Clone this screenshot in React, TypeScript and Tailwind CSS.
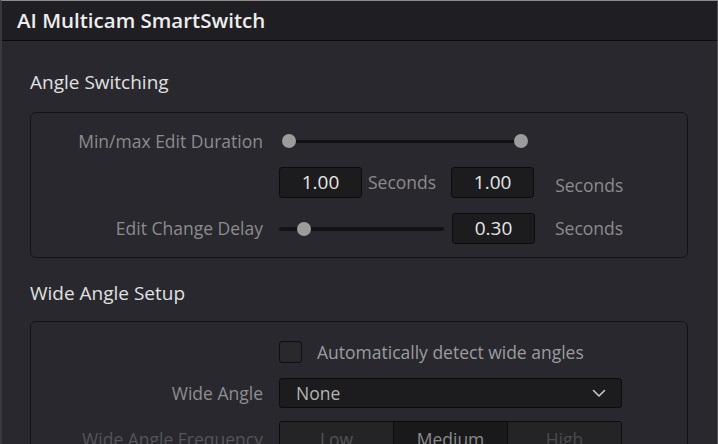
import React from "react";

const font = { fontFamily: '"Open Sans", "Noto Sans", sans-serif' };

const Knob = () => (
  <div className="w-[14px] h-[14px] rounded-full bg-[#9c9c9c] shrink-0" />
);

const NumberBox = ({ value }: { value: string }) => (
  <div className="w-[83px] h-[31px] flex items-center justify-center rounded-[3px] bg-[#1c1c1e] border border-[#0c0c0e] text-[#e6e6e6] text-[19px]">
    {value}
  </div>
);

const App = () => {
  return (
    <div
      style={font}
      className="w-[718px] h-[444px] overflow-hidden bg-[#28282e] border-t border-t-[#8c8c8c] border-l-2 border-l-[#38383d] border-r border-r-[#55555a] flex flex-col"
    >
      <div className="h-10 shrink-0 bg-[#1f1f23] border-b border-[#0b0b0d] flex items-center pl-[15px]">
        <h1 className="text-[#ededed] text-[20.5px] font-semibold">
          AI Multicam SmartSwitch
        </h1>
      </div>

      <div className="flex flex-col pl-[28px] pr-[28px]">
        <h2 className="mt-[29px] text-[#e0e0e0] text-[19px] leading-6">
          Angle Switching
        </h2>

        <div className="mt-[18px] w-[658px] rounded-md border border-[#131317] flex flex-col pt-[16px] pb-[13px] text-[17.5px]">
          <div className="h-6 flex items-center">
            <span className="w-[232px] text-right text-[#8c8c8c]">
              Min/max Edit Duration
            </span>
            <div className="ml-[19px] w-[246px] flex items-center">
              <Knob />
              <div className="flex-1 h-[3px] bg-[#121214]" />
              <Knob />
            </div>
          </div>

          <div className="mt-[14px] h-[31px] flex items-center">
            <div className="ml-[248px] flex items-center">
              <NumberBox value="1.00" />
              <span className="ml-[6px] text-[#8c8c8c]">Seconds</span>
              <div className="ml-[15px]">
                <NumberBox value="1.00" />
              </div>
              <span className="ml-[21px] mt-[6px] text-[#8c8c8c]">Seconds</span>
            </div>
          </div>

          <div className="mt-[15px] h-[31px] flex items-center">
            <span className="w-[232px] text-right text-[#8c8c8c]">
              Edit Change Delay
            </span>
            <div className="ml-[16px] w-[165px] relative flex items-center">
              <div className="w-full h-[4px] rounded-full bg-[#141416]" />
              <div className="absolute left-[18px]">
                <Knob />
              </div>
            </div>
            <div className="ml-[8px]">
              <NumberBox value="0.30" />
            </div>
            <span className="ml-[20px] text-[#8c8c8c]">Seconds</span>
          </div>
        </div>

        <h2 className="mt-[23px] text-[#e0e0e0] text-[19px] leading-6">
          Wide Angle Setup
        </h2>

        <div className="mt-[16px] w-[658px] h-[140px] rounded-md border border-[#131317] flex flex-col pt-[19px] text-[17.5px]">
          <div className="h-[22px] flex items-center">
            <div className="ml-[248px] w-[23px] h-[22px] rounded-[3px] bg-[#29292b] border border-[#0f0f11]" />
            <span className="ml-[15px] text-[#9c9c9c]">
              Automatically detect wide angles
            </span>
          </div>

          <div className="mt-[15px] h-[30px] flex items-center">
            <span className="w-[232px] text-right text-[#8e8e8e]">
              Wide Angle
            </span>
            <div className="ml-[16px] w-[343px] h-[30px] rounded-[3px] bg-[#1c1c1e] border border-[#0c0c0e] flex items-center justify-between pl-[16px] pr-[15px]">
              <span className="text-[#b4b4b4]">None</span>
              <svg width="14" height="9" viewBox="0 0 14 9" fill="none">
                <path
                  d="M1.5 1.5 L7 7 L12.5 1.5"
                  stroke="#c8c8c8"
                  strokeWidth="1.6"
                  strokeLinecap="round"
                  strokeLinejoin="round"
                />
              </svg>
            </div>
          </div>

          <div className="mt-[13px] h-[36px] flex items-center">
            <span className="w-[232px] text-right text-[#55555a]">
              Wide Angle Frequency
            </span>
            <div className="ml-[16px] w-[343px] h-[36px] rounded-[3px] border border-[#0c0c0e] flex overflow-hidden">
              <div className="w-[113px] flex items-center justify-center bg-[#242427] text-[#535356]">
                Low
              </div>
              <div className="w-[115px] flex items-center justify-center bg-[#19191b] border-x border-[#0c0c0e] text-[#8a8a8a]">
                Medium
              </div>
              <div className="flex-1 flex items-center justify-center bg-[#242427] text-[#4a4a4d]">
                High
              </div>
            </div>
          </div>
        </div>
      </div>
    </div>
  );
};

export default App;
